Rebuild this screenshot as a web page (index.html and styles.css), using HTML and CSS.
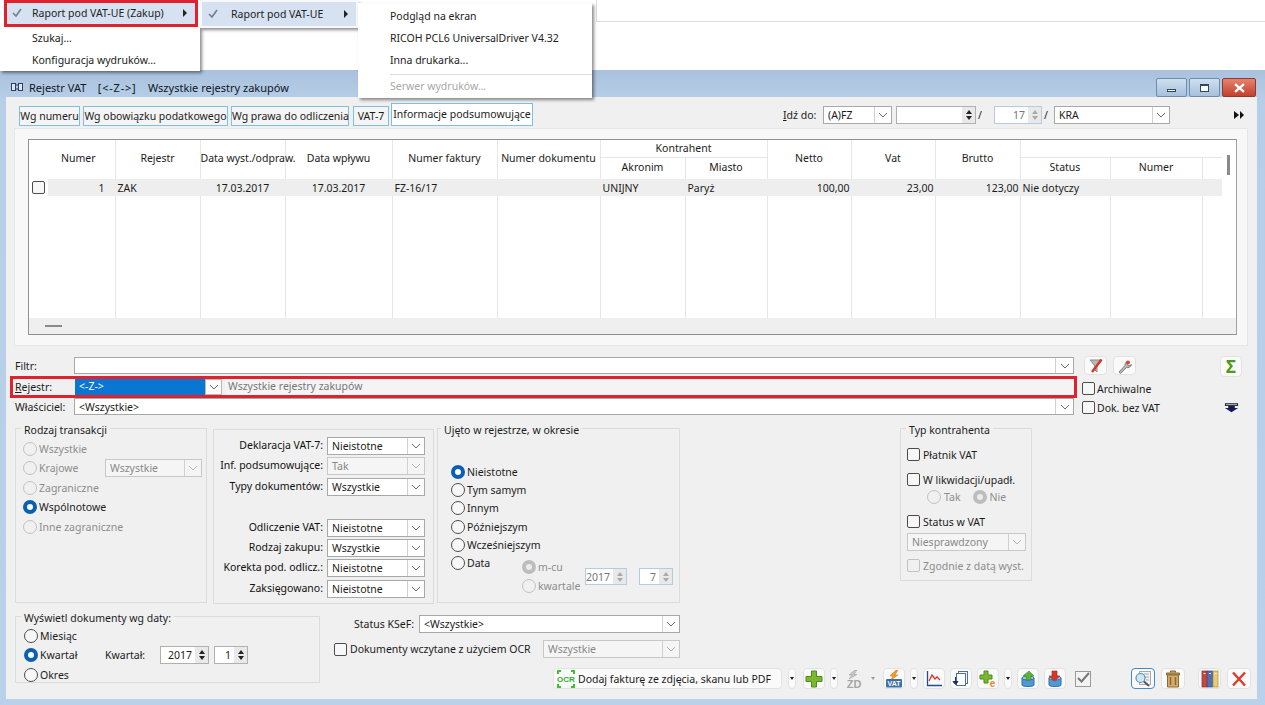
FILE: index.html
```html
<!DOCTYPE html>
<html lang="pl">
<head>
  <meta charset="UTF-8">
  <title>Rejestr VAT</title>
  <link rel="stylesheet" href="styles.css">
</head>
<body>
  <div class="top-area"><div class="top-line"></div></div>

  <!-- menus open over the window -->
  <div class="menu menu-main">
    <div class="menu-item picked">
      <svg class="tick" viewBox="0 0 10 10"><path d="M1 5l3 3 5-7"/></svg>
      <span>Raport pod VAT-UE (Zakup)</span><i class="menu-arrow"></i>
    </div>
    <div class="menu-item"><span>Szukaj...</span></div>
    <div class="menu-item"><span>Konfiguracja wydruków...</span></div>
  </div>
  <div class="menu menu-sub">
    <div class="menu-item picked">
      <svg class="tick" viewBox="0 0 10 10"><path d="M1 5l3 3 5-7"/></svg>
      <span>Raport pod VAT-UE</span><i class="menu-arrow"></i>
    </div>
  </div>
  <div class="menu menu-print">
    <div class="menu-item"><span>Podgląd na ekran</span></div>
    <div class="menu-item"><span>RICOH PCL6 UniversalDriver V4.32</span></div>
    <div class="menu-item"><span>Inna drukarka...</span></div>
    <div class="menu-sep"></div>
    <div class="menu-item off"><span>Serwer wydruków...</span></div>
  </div>

  <div class="window">
    <div class="titlebar">
      <svg class="win-icon" viewBox="0 0 12 10"><rect x="0.5" y="1.5" width="4" height="7" fill="#dfe7f3" stroke="#26406b"/><rect x="7.5" y="1.5" width="4" height="7" fill="#dfe7f3" stroke="#26406b"/><path d="M4 3h4M4 7h4" stroke="#26406b"/></svg>
      <span class="win-title">Rejestr VAT&nbsp;&nbsp;&nbsp; <span class="win-code">[&lt;-Z-&gt;]</span>&nbsp;&nbsp;&nbsp; Wszystkie rejestry zakupów</span>
      <div class="win-buttons">
        <div class="win-btn"><i class="glyph-min"></i></div>
        <div class="win-btn"><i class="glyph-max"></i></div>
        <div class="win-btn close"><svg viewBox="0 0 10 9"><path d="M1 1l8 7M9 1l-8 7"/></svg></div>
      </div>
    </div>

    <div class="panel">
      <div class="tabs-row">
        <div class="tab tab-1">Wg numeru</div>
        <div class="tab tab-2">Wg obowiązku podatkowego</div>
        <div class="tab tab-3">Wg prawa do odliczenia</div>
        <div class="tab tab-4">VAT-7</div>
        <div class="tab active">Informacje podsumowujące</div>

        <div class="goto">
          <span class="goto-label"><u>I</u>dź do:</span>
          <div class="combo goto-a"><span class="combo-text">(A)FZ</span><span class="combo-btn"><svg viewBox="0 0 10 6"><path d="M1 1l4 4 4-4"/></svg></span></div>
          <div class="spin goto-b"><span class="spin-val"></span><span class="spin-btns"><i class="up"></i><i class="down"></i></span></div>
          <span class="slash">/</span>
          <div class="spin off goto-c"><span class="spin-val">17</span><span class="spin-btns"><i class="up"></i><i class="down"></i></span></div>
          <span class="slash">/</span>
          <div class="combo goto-d"><span class="combo-text">KRA</span><span class="combo-btn"><svg viewBox="0 0 10 6"><path d="M1 1l4 4 4-4"/></svg></span></div>
          <svg class="more" viewBox="0 0 12 10"><path d="M1 1l5 4-5 4zM7 1l4 4-4 4z"/></svg>
        </div>
      </div>

      <div class="grid-wrap">
        <div class="grid-box">
          <div class="grid-main">
            <table class="grid">
              <colgroup>
                <col class="c19"><col class="c67"><col class="c85"><col class="c85"><col class="c107"><col class="c105"><col class="c103"><col class="c85"><col class="c82"><col class="c84"><col class="c84"><col class="c85"><col class="c90"><col class="c92"><col class="c20">
              </colgroup>
              <thead>
                <tr>
                  <th rowspan="2" class="blank"></th>
                  <th rowspan="2">Numer</th>
                  <th rowspan="2">Rejestr</th>
                  <th rowspan="2">Data wyst./odpraw.</th>
                  <th rowspan="2">Data wpływu</th>
                  <th rowspan="2">Numer faktury</th>
                  <th rowspan="2">Numer dokumentu</th>
                  <th colspan="2" class="band">Kontrahent</th>
                  <th rowspan="2">Netto</th>
                  <th rowspan="2">Vat</th>
                  <th rowspan="2">Brutto</th>
                  <th colspan="3" class="band"></th>
                </tr>
                <tr>
                  <th class="sub">Akronim</th>
                  <th class="sub">Miasto</th>
                  <th class="sub">Status</th>
                  <th class="sub">Numer</th>
                  <th class="sub"></th>
                </tr>
              </thead>
              <tbody>
                <tr class="data">
                  <td class="mark"><span class="check"></span></td>
                  <td class="num first">1</td>
                  <td>ZAK</td>
                  <td class="mid">17.03.2017</td>
                  <td class="mid">17.03.2017</td>
                  <td>FZ-16/17</td>
                  <td></td>
                  <td>UNIJNY</td>
                  <td>Paryż</td>
                  <td class="num">100,00</td>
                  <td class="num">23,00</td>
                  <td class="num">123,00</td>
                  <td>Nie dotyczy</td>
                  <td></td>
                  <td></td>
                </tr>
                <tr class="filler">
                  <td class="noline"></td><td></td><td></td><td></td><td></td><td></td><td></td><td></td><td></td><td></td><td></td><td></td><td></td><td></td><td></td>
                </tr>
              </tbody>
            </table>
            <div class="vscroll"><i></i></div>
          </div>
          <div class="hscroll"><i></i></div>
        </div>
      </div>

      <div class="filters">
        <div class="filter-fields">
          <div class="filter-row">
            <label class="filter-label">Filtr:</label>
            <div class="combo grow"><span class="combo-text"></span><span class="combo-btn"><svg viewBox="0 0 10 6"><path d="M1 1l4 4 4-4"/></svg></span></div>
          </div>
          <div class="filter-marked">
            <label class="filter-label"><u>R</u>ejestr:</label>
            <div class="combo sel-blue"><span class="combo-text">&lt;-Z-&gt;</span><span class="combo-btn"><svg viewBox="0 0 10 6"><path d="M1 1l4 4 4-4"/></svg></span></div>
            <div class="reg-name">Wszystkie rejestry zakupów</div>
          </div>
          <div class="filter-row">
            <label class="filter-label">Właściciel:</label>
            <div class="combo grow"><span class="combo-text">&lt;Wszystkie&gt;</span><span class="combo-btn"><svg viewBox="0 0 10 6"><path d="M1 1l4 4 4-4"/></svg></span></div>
          </div>
        </div>
        <div class="filter-side">
          <div class="side-icons">
            <div class="tb tb-side">
              <svg viewBox="0 0 16 16"><path d="M2 2h12l-5 6v6l-2-2V8z" fill="#b9b9b9" stroke="#8c8c8c"/><path d="M13.500 1.500L4 14" stroke="#d8352a" stroke-width="2.400"/></svg>
            </div>
            <div class="tb tb-side">
              <svg viewBox="0 0 16 16"><path d="M2 14l1.500 1.500 6-6c2 .7 4.500-.5 5-3l-2.500 1.500-2-1.500L12 3.500c-2.500-.5-4.500 1.500-4 4z" fill="#b8b8b8" stroke="#808080"/><circle cx="11" cy="4.500" r="2" fill="#d9472b"/></svg>
            </div>
            <div class="tb tb-sigma"><span>Σ</span></div>
          </div>
          <div class="side-check"><span class="check"></span>Archiwalne</div>
          <div class="side-check"><span class="check"></span>Dok. bez VAT
            <svg class="side-arrow" viewBox="0 0 16 11"><path d="M1 1h14v3h-3.500v2H15L8 10.500 1 6h3.500V4H1z" fill="#101a5c"/><path d="M2 2h12v1H2z" fill="#f2d14a"/></svg>
          </div>
        </div>
      </div>

      <div class="groups">
        <fieldset class="group g-trans">
          <legend>Rodzaj transakcji</legend>
          <div class="opt off"><span class="radio"></span>Wszystkie</div>
          <div class="opt off"><span class="radio"></span>Krajowe
            <div class="combo off g-trans-sel"><span class="combo-text">Wszystkie</span><span class="combo-btn"><svg viewBox="0 0 10 6"><path d="M1 1l4 4 4-4"/></svg></span></div>
          </div>
          <div class="opt off"><span class="radio"></span>Zagraniczne</div>
          <div class="opt"><span class="radio on"></span>Wspólnotowe</div>
          <div class="opt off"><span class="radio"></span>Inne zagraniczne</div>
        </fieldset>

        <div class="group g-flags">
          <label>Deklaracja VAT-7:</label>
          <div class="combo"><span class="combo-text">Nieistotne</span><span class="combo-btn"><svg viewBox="0 0 10 6"><path d="M1 1l4 4 4-4"/></svg></span></div>
          <label>Inf. podsumowujące:</label>
          <div class="combo off"><span class="combo-text">Tak</span><span class="combo-btn"><svg viewBox="0 0 10 6"><path d="M1 1l4 4 4-4"/></svg></span></div>
          <label>Typy dokumentów:</label>
          <div class="combo"><span class="combo-text">Wszystkie</span><span class="combo-btn"><svg viewBox="0 0 10 6"><path d="M1 1l4 4 4-4"/></svg></span></div>
          <div class="flags-gap"></div>
          <label>Odliczenie VAT:</label>
          <div class="combo"><span class="combo-text">Nieistotne</span><span class="combo-btn"><svg viewBox="0 0 10 6"><path d="M1 1l4 4 4-4"/></svg></span></div>
          <label>Rodzaj zakupu:</label>
          <div class="combo"><span class="combo-text">Wszystkie</span><span class="combo-btn"><svg viewBox="0 0 10 6"><path d="M1 1l4 4 4-4"/></svg></span></div>
          <label>Korekta pod. odlicz.:</label>
          <div class="combo"><span class="combo-text">Nieistotne</span><span class="combo-btn"><svg viewBox="0 0 10 6"><path d="M1 1l4 4 4-4"/></svg></span></div>
          <label>Zaksięgowano:</label>
          <div class="combo"><span class="combo-text">Nieistotne</span><span class="combo-btn"><svg viewBox="0 0 10 6"><path d="M1 1l4 4 4-4"/></svg></span></div>
        </div>

        <fieldset class="group g-period">
          <legend>Ujęto w rejestrze, w okresie</legend>
          <div class="opt tight"><span class="radio on"></span>Nieistotne</div>
          <div class="opt tight"><span class="radio"></span>Tym samym</div>
          <div class="opt tight"><span class="radio"></span>Innym</div>
          <div class="opt tight"><span class="radio"></span>Późniejszym</div>
          <div class="opt tight"><span class="radio"></span>Wcześniejszym</div>
          <div class="data-row">
            <div class="opt tight data-opt"><span class="radio"></span>Data</div>
            <div class="data-sub">
              <div class="data-kind">
                <div class="opt off"><span class="radio dot"></span>m-cu</div>
                <div class="opt off"><span class="radio"></span>kwartale</div>
              </div>
              <div class="spin off s-year"><span class="spin-val">2017</span><span class="spin-btns"><i class="up"></i><i class="down"></i></span></div>
              <div class="spin off s-small"><span class="spin-val">7</span><span class="spin-btns"><i class="up"></i><i class="down"></i></span></div>
            </div>
          </div>
        </fieldset>

        <fieldset class="group g-type">
          <legend>Typ kontrahenta</legend>
          <div class="opt t-a"><span class="check"></span>Płatnik VAT</div>
          <div class="opt t-b"><span class="check"></span>W likwidacji/upadł.</div>
          <div class="type-sub">
            <div class="opt off"><span class="radio"></span>Tak</div>
            <div class="opt off"><span class="radio dot"></span>Nie</div>
          </div>
          <div class="opt t-b"><span class="check"></span>Status w VAT</div>
          <div class="combo off t-sel"><span class="combo-text">Niesprawdzony</span><span class="combo-btn"><svg viewBox="0 0 10 6"><path d="M1 1l4 4 4-4"/></svg></span></div>
          <div class="opt off t-c"><span class="check"></span>Zgodnie z datą wyst.</div>
        </fieldset>
      </div>

      <div class="bottom">
        <fieldset class="group g-date">
          <legend>Wyświetl dokumenty wg daty:</legend>
          <div class="opt"><span class="radio"></span>Miesiąc</div>
          <div class="opt"><span class="date-opt"><span class="radio on"></span>Kwartał</span>
            <span class="date-label">Kwartał:</span>
            <div class="spin s-y"><span class="spin-val">2017</span><span class="spin-btns"><i class="up"></i><i class="down"></i></span></div>
            <div class="spin s-q"><span class="spin-val">1</span><span class="spin-btns"><i class="up"></i><i class="down"></i></span></div>
          </div>
          <div class="opt"><span class="radio"></span>Okres</div>
        </fieldset>

        <div class="bottom-right">
          <div class="ksef-row">
            <label class="ksef-label">Status KSeF:</label>
            <div class="combo ksef-sel"><span class="combo-text">&lt;Wszystkie&gt;</span><span class="combo-btn"><svg viewBox="0 0 10 6"><path d="M1 1l4 4 4-4"/></svg></span></div>
          </div>
          <div class="ocr-row">
            <div class="opt ocr-opt"><span class="check"></span>Dokumenty wczytane z użyciem OCR</div>
            <div class="combo off ocr-sel"><span class="combo-text">Wszystkie</span><span class="combo-btn"><svg viewBox="0 0 10 6"><path d="M1 1l4 4 4-4"/></svg></span></div>
          </div>

          <div class="toolbar">
            <div class="tb tb-ocr">
              <svg class="ocr-mark" viewBox="0 0 20 18"><path d="M2 4V1h3M15 1h3v3M18 14v3h-3M5 17H2v-3" fill="none" stroke="#3fc12f" stroke-width="2"/><text x="10" y="12" text-anchor="middle" class="ocr-text">OCR</text></svg>
              <span>Dodaj fakturę ze zdjęcia, skanu lub PDF</span>
            </div>
            <div class="tb dd m1"><i></i></div>
            <div class="tb m2">
              <svg viewBox="0 0 18 18"><path d="M6.500 1h5v5.500H17v5h-5.500V17h-5v-5.500H1v-5h5.500z" fill="#7cb82f" stroke="#4f8a1c"/></svg>
            </div>
            <div class="tb dd"><i></i></div>
            <div class="tb tb-zd m1">
              <svg viewBox="0 0 18 18"><path d="M10 0L4 5h3L4 9l8-4.500H9l3-4.500z" fill="#c4c4c4" stroke="#9a9a9a" stroke-width=".5"/><text x="9" y="17.500" text-anchor="middle" class="mini-bold gray">ZD</text></svg>
            </div>
            <div class="tb dd off"><i></i></div>
            <div class="tb m1">
              <svg viewBox="0 0 18 18"><path d="M11 0L5 6h3L6 10l7-5h-3l3-5z" fill="#f39a1e" stroke="#d8720f" stroke-width=".5"/><rect x="1" y="9" width="16" height="8.500" rx="1" fill="#3f6fa5"/><text x="9" y="16" text-anchor="middle" class="mini-bold white">VAT</text></svg>
            </div>
            <div class="tb dd"><i></i></div>
            <div class="tb">
              <svg viewBox="0 0 18 18"><path d="M2.500 1v14.500H17" fill="none" stroke="#1f4e91" stroke-width="1.300"/><path d="M4 11l3-6 3 4 2-2 3 3" fill="none" stroke="#d8352a" stroke-width="1.300"/></svg>
            </div>
            <div class="tb">
              <svg viewBox="0 0 18 18"><rect x="6.500" y="1.500" width="9" height="12" fill="#f4f7fb" stroke="#51719a"/><rect x="4.500" y="3.500" width="9" height="12" fill="#fff" stroke="#51719a"/><path d="M3.500 7v6M1 11.500l2.500 3 2.500-3z" stroke="#16336b" fill="#16336b"/></svg>
            </div>
            <div class="tb">
              <svg viewBox="0 0 18 18"><path d="M5 1h4v4h4v4H9v4H5V9H1V5h4z" fill="#7cb82f" stroke="#4f8a1c"/><text x="13.500" y="17" text-anchor="middle" class="mini-e">e</text></svg>
            </div>
            <div class="tb dd"><i></i></div>
            <div class="tb">
              <svg viewBox="0 0 18 18"><path d="M3 8v7c0 2 12 2 12 0V8z" fill="#4f9ad6" stroke="#2f6fa6"/><ellipse cx="9" cy="8" rx="6" ry="2" fill="#a8d2ef" stroke="#2f6fa6"/><path d="M7 10V6H4l6-5 5 5h-3v4z" fill="#5fb33a" stroke="#3c8524" stroke-width=".6"/></svg>
            </div>
            <div class="tb">
              <svg viewBox="0 0 18 18"><path d="M3 8v7c0 2 12 2 12 0V8z" fill="#4f9ad6" stroke="#2f6fa6"/><ellipse cx="9" cy="8" rx="6" ry="2" fill="#a8d2ef" stroke="#2f6fa6"/><path d="M6 1h5v5h3l-5.500 5L3 6h3z" fill="#d8352a" stroke="#a8231b" stroke-width=".6"/></svg>
            </div>
            <div class="tb tb-plain m1">
              <svg viewBox="0 0 18 18"><rect x="1.500" y="1.500" width="15" height="15" fill="#f3f3f3" stroke="#9a9a9a"/><path d="M4 8l3.500 3.500L15 3" fill="none" stroke="#777" stroke-width="2"/></svg>
            </div>
            <div class="tb tb-w24 focus m38">
              <svg viewBox="0 0 18 18"><rect x="5.500" y="1.500" width="11" height="13" fill="#f4f4f4" stroke="#a9a9a9"/><path d="M10 4h5M11 7h4M12 10h3" stroke="#a9a9a9"/><circle cx="6.500" cy="8" r="4.500" fill="#cfe6f7" stroke="#5b8fbf" stroke-width="1.200"/><path d="M10 11.500l5 4.500" stroke="#555" stroke-width="2"/></svg>
            </div>
            <div class="tb tb-w24 m1">
              <svg viewBox="0 0 18 18"><path d="M6.500 2.500V1h5v1.500M2.500 3h13v2h-13z" fill="#c39a59" stroke="#8a6a30"/><path d="M3.500 5h11v12h-11z" fill="#d2ad6c" stroke="#8a6a30"/><path d="M6.500 7v8M11.500 7v8" stroke="#8a6a30" stroke-width="1.500"/></svg>
            </div>
            <div class="tb tb-w23 m13">
              <svg viewBox="0 0 18 18"><rect x="1" y="1" width="5" height="16" fill="#c9463c" stroke="#8a2a24" stroke-width=".7"/><rect x="6.500" y="1" width="5" height="16" fill="#4b70b8" stroke="#2c4a85" stroke-width=".7"/><rect x="12" y="1" width="5" height="16" fill="#eccb72" stroke="#a88a3a" stroke-width=".7"/><path d="M2.500 3.500h2M8 3.500h2M13.500 3.500h2" stroke="#fff"/></svg>
            </div>
            <div class="tb tb-w24 m1">
              <svg viewBox="0 0 18 18"><path d="M3 2.500l12 13M15 2.500L3 15.500" stroke="#dd3a2c" stroke-width="2.400"/></svg>
            </div>
          </div>
        </div>
      </div>
    </div>
  </div>
</body>
</html>
```

FILE: styles.css
```css
* {
  box-sizing: border-box;
}

body {
  margin: 0;
  width: 1265px;
  height: 705px;
  overflow: hidden;
  position: relative;
  font-family: "Noto Sans", "Open Sans", sans-serif;
  font-size: 10.500px;
  color: #1c1c1c;
  background: #fff;
}

/* what is left of the page behind the window */
.top-area {
  height: 70px;
}

.top-line {
  height: 22px;
  margin-left: 596px;
  border-left: 1px solid #dcdcdc;
  border-bottom: 1px solid #dcdcdc;
}

/* menus */
.menu {
  position: absolute;
  background: #fff;
  box-shadow: 2px 2px 3px rgba(0, 0, 0, 0.45);
  z-index: 5;
}

.menu-main {
  left: 0;
  top: 0;
  width: 200px;
  height: 71px;
  padding-top: 3px;
}

.menu-sub {
  left: 200px;
  top: 1px;
  width: 158px;
  height: 27px;
  padding: 1px 2px;
  background: #f8f8f8;
}

.menu-print {
  left: 358px;
  top: 3px;
  width: 234px;
  height: 95px;
  padding-top: 2px;
}

.menu-item {
  height: 22px;
  display: flex;
  align-items: center;
  padding-left: 32px;
  color: #222;
}

.menu-main .menu-item.picked {
  margin: -3px 2px 0 4px;
  height: 27px;
  padding: 0 0 2px 25px;
  border: 3px solid #e0222e;
  background: #d6e1f1;
}

.menu-sub .menu-item {
  height: 24px;
  padding-left: 29px;
  background: #d6e1f1;
}

.menu-print .menu-item {
  padding-left: 32px;
}

.menu-item.off {
  color: #a8a8a8;
}

.menu-sep {
  height: 1px;
  margin: 3px 0 0 32px;
  background: #dcdcdc;
}

.tick {
  width: 10px;
  height: 10px;
  margin-left: -23px;
  margin-right: 13px;
  fill: none;
  stroke: #6f7f92;
  stroke-width: 1.6;
}

.menu-main .tick {
  margin-left: -20px;
  margin-right: 10px;
}

.menu-arrow {
  margin-left: auto;
  margin-right: 8px;
  border-left: 4px solid #222;
  border-top: 4px solid transparent;
  border-bottom: 4px solid transparent;
}

/* window frame */
.window {
  height: 635px;
  display: flex;
  flex-direction: column;
  padding: 0 8px 6px 6px;
  background: linear-gradient(180deg, #a9c1dc 0, #b6cee7 30px, #b9d1ea 100%);
}

.titlebar {
  height: 27px;
  display: flex;
  align-items: flex-end;
  padding: 0 1px 2px 5px;
}

.win-icon {
  width: 12px;
  height: 10px;
  margin-bottom: 3px;
}

.win-title {
  margin-left: 6px;
  color: #10171f;
  font-size: 11px;
  line-height: 15px;
}

.win-code {
  letter-spacing: 0.8px;
}

.win-buttons {
  margin-left: auto;
  display: flex;
  gap: 2px;
  align-self: flex-start;
  margin-top: 8px;
}

.win-btn {
  width: 31px;
  height: 19px;
  border: 1px solid #6e8cae;
  border-radius: 2px;
  background: linear-gradient(180deg, #cfdfef, #a7c0dc);
  display: flex;
  align-items: center;
  justify-content: center;
}

.win-btn.close {
  width: 34px;
  border-color: #8e3a2e;
  background: linear-gradient(180deg, #e5836e, #c2402e);
}

.win-btn.close svg {
  width: 11px;
  height: 10px;
  fill: none;
  stroke: #fff;
  stroke-width: 2.2;
}

.glyph-min {
  width: 9px;
  height: 3px;
  margin-top: 6px;
  background: #fff;
  border: 1px solid #32475f;
}

.glyph-max {
  width: 9px;
  height: 8px;
  background: #fff;
  border: 1px solid #32475f;
  border-top-width: 2px;
}

.panel {
  flex: 1;
  background: #f0f0f0;
  min-height: 0;
}

/* tabs */
.tabs-row {
  height: 24px;
  margin-top: 6px;
  padding-left: 13px;
  display: flex;
  align-items: flex-end;
  gap: 3px;
}

.tab {
  height: 20px;
  margin-bottom: 1px;
  border: 1px solid #7fbfe0;
  background: #f4f4f4;
  line-height: 18px;
  text-align: center;
  white-space: nowrap;
}

.tab-1 { width: 61px; }
.tab-2 { width: 145px; }
.tab-3 { width: 118px; }
.tab-4 { width: 36px; margin-left: 1px; }

.tab.active {
  width: 142px;
  height: 23px;
  margin-left: -1px;
  background: #fff;
  line-height: 20px;
}

.goto {
  margin-left: auto;
  padding-right: 12px;
  height: 24px;
  display: flex;
  align-items: center;
}

.goto-label {
  width: 40px;
}

.goto-a { width: 69px; }
.goto-b { width: 80px; margin-left: 4px; }
.goto-c { width: 48px; margin-left: 14px; }
.goto-d { width: 116px; margin-left: 8px; }

.slash {
  width: 2px;
  margin-left: 2px;
}

.more {
  width: 12px;
  height: 10px;
  margin-left: 63px;
  fill: #111;
}

/* form controls */
.combo {
  height: 18px;
  display: flex;
  border: 1px solid #a8a8a8;
  background: #fff;
  line-height: 16px;
  min-width: 0;
}

.combo-text {
  flex: 1;
  padding-left: 4px;
  white-space: nowrap;
  overflow: hidden;
}

.combo-btn {
  width: 17px;
  flex: none;
  display: flex;
  align-items: center;
  justify-content: center;
  border-left: 1px solid #d0d0d0;
  background: #fdfdfd;
}

.combo-btn svg {
  width: 10px;
  height: 6px;
  fill: none;
  stroke: #6a6a6a;
}

.combo.off {
  border-color: #c8c8c8;
  background: #f5f5f5;
  color: #888;
}

.combo.off .combo-btn {
  background: #f5f5f5;
}

.combo.off .combo-btn svg {
  stroke: #b5b5b5;
}

.spin {
  height: 18px;
  display: flex;
  border: 1px solid #b0b0b0;
  background: #fff;
}

.spin-val {
  flex: 1;
  text-align: right;
  padding-right: 3px;
  line-height: 16px;
}

.spin-btns {
  width: 13px;
  flex: none;
  display: flex;
  flex-direction: column;
  align-items: center;
  justify-content: center;
  gap: 2px;
  background: #e9e9e9;
}

.spin-btns i {
  border-left: 3px solid transparent;
  border-right: 3px solid transparent;
}

.spin-btns .up {
  border-bottom: 4px solid #222;
}

.spin-btns .down {
  border-top: 4px solid #222;
}

.spin.off {
  border-color: #b6cbe2;
  color: #777;
}

.spin.off .up {
  border-bottom-color: #aaa;
}

.spin.off .down {
  border-top-color: #aaa;
}

.check {
  width: 13px;
  height: 13px;
  flex: none;
  display: inline-block;
  border: 1px solid #4c4c4c;
  border-radius: 2px;
  background: #f7f7f7;
}

.radio {
  width: 14px;
  height: 14px;
  flex: none;
  display: inline-block;
  border: 1px solid #4c4c4c;
  border-radius: 50%;
  background: #f7f7f7;
}

.radio.on {
  border: 4px solid #0b5fb0;
  background: #fff;
}

.opt {
  height: 19.500px;
  display: flex;
  align-items: center;
  gap: 2px;
  white-space: nowrap;
}

.opt.tight {
  height: 18.200px;
}

.opt.off {
  color: #8d8d8d;
}

.opt.off .radio,
.opt.off .check {
  border-color: #c2c2c2;
  background: #f0f0f0;
}

.opt.off .radio.dot {
  border: 4px solid #bdbdbd;
  background: #ececec;
}

/* register table */
.grid-wrap {
  height: 218px;
  margin: 1px 9px 0 8px;
  padding: 10px 10px 10px 13px;
  background: #f8f8f8;
  border: 1px solid #e6e6e6;
}

.grid-box {
  height: 196px;
  display: flex;
  flex-direction: column;
  border: 1px solid #8f8f96;
  border-right-color: #a0a0a0;
  background: #fff;
}

.grid-main {
  flex: 1;
  display: flex;
  align-items: flex-start;
  min-height: 0;
}

.grid {
  width: 1193px;
  flex: none;
  table-layout: fixed;
  border-collapse: collapse;
}

.c19 { width: 19px; }
.c20 { width: 20px; }
.c67 { width: 67px; }
.c82 { width: 82px; }
.c84 { width: 84px; }
.c85 { width: 85px; }
.c90 { width: 90px; }
.c92 { width: 92px; }
.c103 { width: 103px; }
.c105 { width: 105px; }
.c107 { width: 107px; }

.grid th {
  height: 19px;
  padding: 0;
  font-weight: normal;
  text-align: center;
  white-space: nowrap;
  border-left: 1px solid #e6e6e6;
}

.grid th[rowspan] {
  padding-bottom: 4px;
}

.grid th.blank,
.grid th.blank + th,
.filler td.noline,
.filler td.noline + td {
  border-left: 0;
}

.grid th.blank + th {
  padding-right: 6px;
}

.grid th.band {
  height: 17px;
  border-bottom: 1px solid #dfe7ee;
}

.grid th.sub {
  height: 22px;
  padding-bottom: 2px;
}

.grid td {
  padding: 0 2px;
  border-left: 1px solid #e6e6e6;
  white-space: nowrap;
}

.data td {
  height: 17px;
  background: #eeeeee;
  border-left-color: #eeeeee;
}

.data td.mark {
  padding: 0 0 0 3px;
  background: #fff;
  border-left: 0;
  line-height: 0;
}

.data td.num {
  text-align: right;
  padding-right: 1px;
}

.data td.num.first {
  padding-right: 10px;
}

.data td.mid {
  text-align: center;
}

.filler td {
  height: 122px;
}

.vscroll {
  flex: 1;
  padding: 15px 0 0 5px;
}

.vscroll i {
  display: block;
  width: 3px;
  height: 20px;
  background: #8a8a8a;
}

.hscroll {
  height: 16px;
  flex: none;
  padding: 7px 0 0 16px;
  background: #efefef;
}

.hscroll i {
  display: block;
  width: 17px;
  height: 2px;
  background: #8a8a8a;
}

/* filter rows */
.filters {
  display: flex;
  height: 58px;
  margin-top: 11px;
}

.filter-fields {
  width: 1071px;
  padding-left: 4px;
}

.filter-row {
  height: 17px;
  display: flex;
  align-items: center;
  padding-left: 5px;
}

.filter-row .combo {
  height: 17px;
}

.filter-row .combo-btn {
  width: 18px;
}

.filter-label {
  width: 59px;
  flex: none;
}

.grow {
  flex: 1;
  margin-right: 3px;
}

.filter-marked {
  height: 22px;
  margin: 2px 0 0;
  border: 3px solid #e0222e;
  display: flex;
  align-items: center;
  padding-left: 2px;
  position: relative;
  z-index: 1;
}

.filter-marked .filter-label {
  width: 60px;
}

.sel-blue {
  width: 147px;
  height: 16px;
  border: 0;
  background: #0a76d4;
  color: #fff;
  line-height: 15px;
}

.sel-blue .combo-btn {
  background: #fbfbfb;
  border: 1px solid #b8b8b8;
}

.reg-name {
  flex: 1;
  height: 16px;
  margin-left: 3px;
  padding-left: 3px;
  background: #f4f4f4;
  color: #777;
  line-height: 15px;
}

.filter-side {
  flex: 1;
  padding-left: 7px;
}

.side-icons {
  height: 19px;
  display: flex;
  gap: 6px;
  margin-bottom: 4px;
  margin-top: -1px;
}

.tb-sigma {
  width: 23px;
  height: 19px;
  margin-left: 78px;
  color: #4f9a17;
  font-size: 17px;
  font-weight: bold;
  line-height: 1;
}

.side-check {
  height: 19px;
  margin-left: -2px;
  display: flex;
  align-items: center;
  gap: 2px;
}

.side-arrow {
  width: 15px;
  height: 11px;
  margin-left: auto;
  margin-right: 18px;
}

/* group boxes */
.groups {
  display: flex;
  margin-top: 4px;
  padding-left: 9px;
  align-items: flex-start;
}

.group {
  margin: 0;
  padding: 0;
  min-width: 0;
  border: 1px solid #dcdcdc;
}

legend {
  padding: 4px 3px 0;
  line-height: 15px;
}

.g-trans {
  width: 192px;
  height: 184px;
  padding: 1px 0 0 7px;
}

.g-trans legend {
  margin-left: -2px;
}

.g-trans-sel {
  width: 97px;
  margin-left: auto;
  margin-right: 4px;
}

.g-flags {
  width: 221px;
  height: 175px;
  margin: 10px 0 0 6px;
  padding-top: 7px;
  display: grid;
  grid-template-columns: 109px 98px;
  grid-auto-rows: 18px;
  column-gap: 4px;
  row-gap: 2.400px;
}

.g-flags label {
  text-align: right;
  line-height: 16px;
  white-space: nowrap;
  color: #111;
}

.flags-gap {
  grid-column: 1 / 3;
}

.g-period {
  width: 243px;
  height: 184px;
  margin-left: 3px;
  padding: 25px 0 0 13px;
}

.g-period legend {
  margin-left: -10px;
}

.data-row {
  display: flex;
  align-items: flex-start;
}

.data-opt {
  width: 71px;
}

.data-sub {
  display: flex;
  align-items: center;
  margin-top: 4px;
}

.data-kind {
  width: 63px;
}

.data-kind .opt {
  height: 19px;
}

.s-year {
  width: 42px;
  height: 17px;
}

.s-small {
  width: 34px;
  height: 17px;
  margin-left: 12px;
}

.g-type {
  width: 132px;
  height: 162px;
  margin-left: 220px;
  padding: 9px 0 0 6px;
}

.g-type legend {
  margin-left: -1px;
}

.g-type .opt {
  height: 15px;
  gap: 3px;
}

.t-b {
  margin-top: 10px;
}

.type-sub {
  display: flex;
  gap: 12px;
  margin: 2px 0 0 20px;
}

.t-sel {
  width: 119px;
  margin-top: 4px;
}

.t-c {
  margin-top: 7px;
}

/* bottom area */
.bottom {
  display: flex;
  margin-top: 3px;
  padding-left: 9px;
  align-items: flex-start;
}

.g-date {
  width: 305px;
  height: 76px;
  padding: 0 0 0 8px;
}

.g-date legend {
  margin-left: -3px;
}

.date-opt {
  width: 79px;
  display: flex;
  align-items: center;
  gap: 2px;
}

.date-label {
  width: 53px;
}

.s-y {
  width: 49px;
}

.s-q {
  width: 34px;
  margin-left: 3px;
}

.bottom-right {
  width: 915px;
  margin-left: 14px;
  padding-top: 8px;
}

.ksef-row,
.ocr-row {
  display: flex;
  align-items: center;
}

.ksef-label {
  width: 80px;
  text-align: right;
  margin-right: 5px;
}

.ksef-sel {
  width: 261px;
}

.ocr-row {
  margin-top: 7px;
}

.ocr-opt {
  width: 209px;
  height: 18px;
  gap: 3px;
}

.ocr-sel {
  width: 137px;
}

/* toolbar */
.toolbar {
  display: flex;
  margin: 10px 0 0 219px;
  gap: 5px;
  height: 21px;
}

.tb {
  width: 22px;
  height: 21px;
  flex: none;
  display: flex;
  align-items: center;
  justify-content: center;
  border: 1px solid #e2e2e2;
  border-radius: 4px;
  background: #fafafa;
}

.tb svg {
  width: 18px;
  height: 18px;
}

.tb-side {
  width: 23px;
  height: 19px;
}

.tb-side svg {
  width: 16px;
  height: 16px;
}

.tb-ocr {
  width: 229px;
  justify-content: flex-start;
  padding-left: 2px;
  gap: 2px;
  white-space: nowrap;
}

.tb-ocr svg.ocr-mark {
  width: 20px;
  height: 18px;
}

.ocr-text {
  font: bold 8px "Liberation Sans", sans-serif;
  fill: #33b02a;
}

.mini-bold {
  font: bold 7px "Liberation Sans", sans-serif;
}

.mini-bold.gray {
  font-size: 11px;
  fill: #a6a6a6;
}

.mini-bold.white {
  fill: #fff;
}

.mini-e {
  font: bold 10px "Liberation Sans", sans-serif;
  fill: #e8852a;
}

.tb.dd {
  width: 8px;
}

.tb.dd i {
  border-left: 2px solid transparent;
  border-right: 2px solid transparent;
  border-top: 3px solid #222;
}

.tb.dd.off {
  background: #f0f0f0;
  border-color: #f0f0f0;
}

.tb.dd.off i {
  border-top-color: #999;
}

.tb-zd {
  width: 20px;
  background: #f0f0f0;
  border-color: #f0f0f0;
}

.tb-plain {
  width: 21px;
  background: #f0f0f0;
  border-color: #f0f0f0;
}

.tb-w24 { width: 24px; }
.tb-w23 { width: 23px; }
.focus { border-color: #3f8cc8; }

.m1 { margin-left: 1px; }
.m2 { margin-left: 2px; }
.m13 { margin-left: 8px; }
.m38 { margin-left: 33px; }
```
